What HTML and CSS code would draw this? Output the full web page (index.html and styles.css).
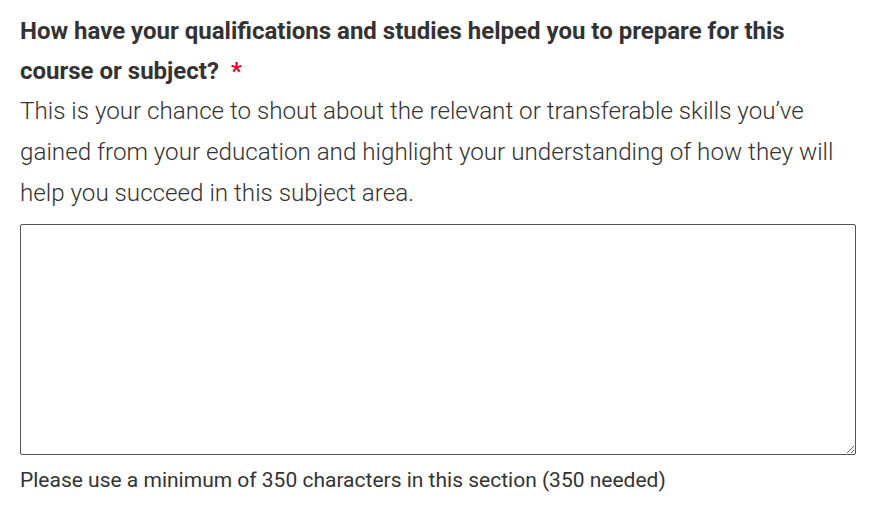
FILE: index.html
```html
<!DOCTYPE html>
<html>

<head>
    <title>Personal statement</title>
    <link rel="stylesheet" href="styles.css">
</head>

<body>
    <div class="question">
        <label class="question-title" for="answer">How have your qualifications and studies helped you to prepare for this course or subject?<span class="required">*</span></label>
        <p class="question-hint">This is your chance to shout about the relevant or transferable skills you’ve gained from your education and highlight your understanding of how they will help you succeed in this subject area.</p>
        <textarea id="answer" name="answer" class="answer"></textarea>
        <p class="counter">Please use a minimum of 350 characters in this section (350 needed)</p>
    </div>
</body>

</html>
```
FILE: styles.css
```css
body {
    margin: 0;
    background: #fff;
    font-family: Roboto, "Liberation Sans", sans-serif;
    color: #333;
}

.question {
    width: 836px;
    padding: 11px 20px 10px;
}

.question-title {
    display: block;
    font-size: 24px;
    font-weight: 700;
    line-height: 40px;
}

.question .required {
    color: #e4002b;
    margin-left: 12px;
}

.question-hint {
    margin: 0 0 10px;
    font-size: 24.2px;
    font-weight: 300;
    line-height: 41px;
}

.answer {
    display: block;
    box-sizing: border-box;
    width: 836px;
    height: 231px;
    margin: 0;
    border: 1px solid #555;
    border-radius: 2px;
    font-family: inherit;
    font-size: 16px;
}

.counter {
    margin: 12px 0 0;
    font-size: 21px;
    line-height: 26px;
}
```
